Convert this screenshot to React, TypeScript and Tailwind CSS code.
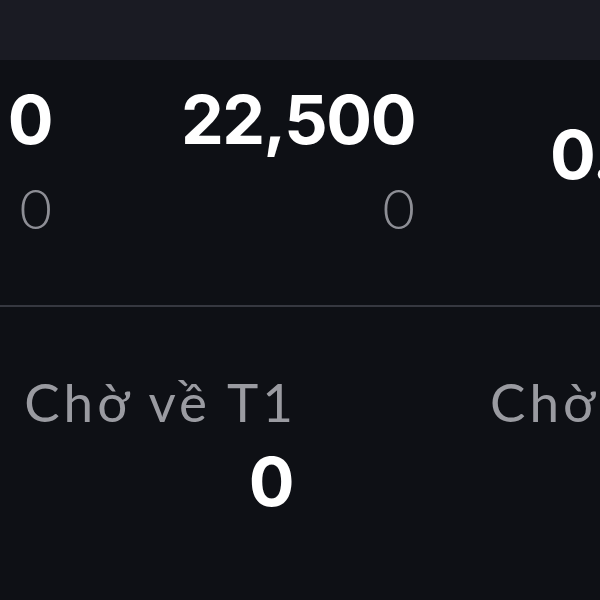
export default function App() {
  const bold = { fontFamily: 'Inter, "Liberation Sans", sans-serif' };
  const light = { fontFamily: 'Lato, "Noto Sans", sans-serif' };

  return (
    <div className="w-[600px] h-[600px] overflow-hidden bg-[#0e1015]">
      <div className="h-[60px] bg-[#1a1b23]" />

      <div className="h-[245px] flex">
        <div className="w-[52px] shrink-0 flex flex-col items-end pt-[25px]">
          <span className="text-[68px] leading-none font-bold tracking-[-1.5px] text-white" style={bold}>0</span>
          <span className="mt-[27px] text-[56px] leading-none font-light text-[#8d8e95]" style={light}>0</span>
        </div>
        <div className="w-[363px] shrink-0 flex flex-col items-end pt-[25px]">
          <span className="text-[68px] leading-none font-bold tracking-[-1.5px] text-white whitespace-nowrap" style={bold}>22,500</span>
          <span className="mt-[27px] text-[56px] leading-none font-light text-[#8d8e95]" style={light}>0</span>
        </div>
        <div className="flex-1 pl-[135px] pt-[60px] overflow-hidden">
          <span className="text-[68px] leading-none font-bold tracking-[-1.5px] text-white whitespace-nowrap" style={bold}>0.00</span>
        </div>
      </div>

      <div className="h-[2px] bg-[#363840]" />

      <div className="flex pt-[68px]">
        <div className="w-[293px] shrink-0 flex flex-col items-end">
          <span className="mr-[-4px] text-[53px] leading-none tracking-[4px] text-[#9a9ba1] whitespace-nowrap" style={light}>Chờ về T1</span>
          <span className="mt-[19px] text-[68px] leading-none font-bold tracking-[-1.5px] text-white" style={bold}>0</span>
        </div>
        <div className="pl-[197px] overflow-hidden">
          <span className="text-[53px] leading-none tracking-[4px] text-[#9a9ba1] whitespace-nowrap" style={light}>Chờ về T2</span>
        </div>
      </div>
    </div>
  );
}
